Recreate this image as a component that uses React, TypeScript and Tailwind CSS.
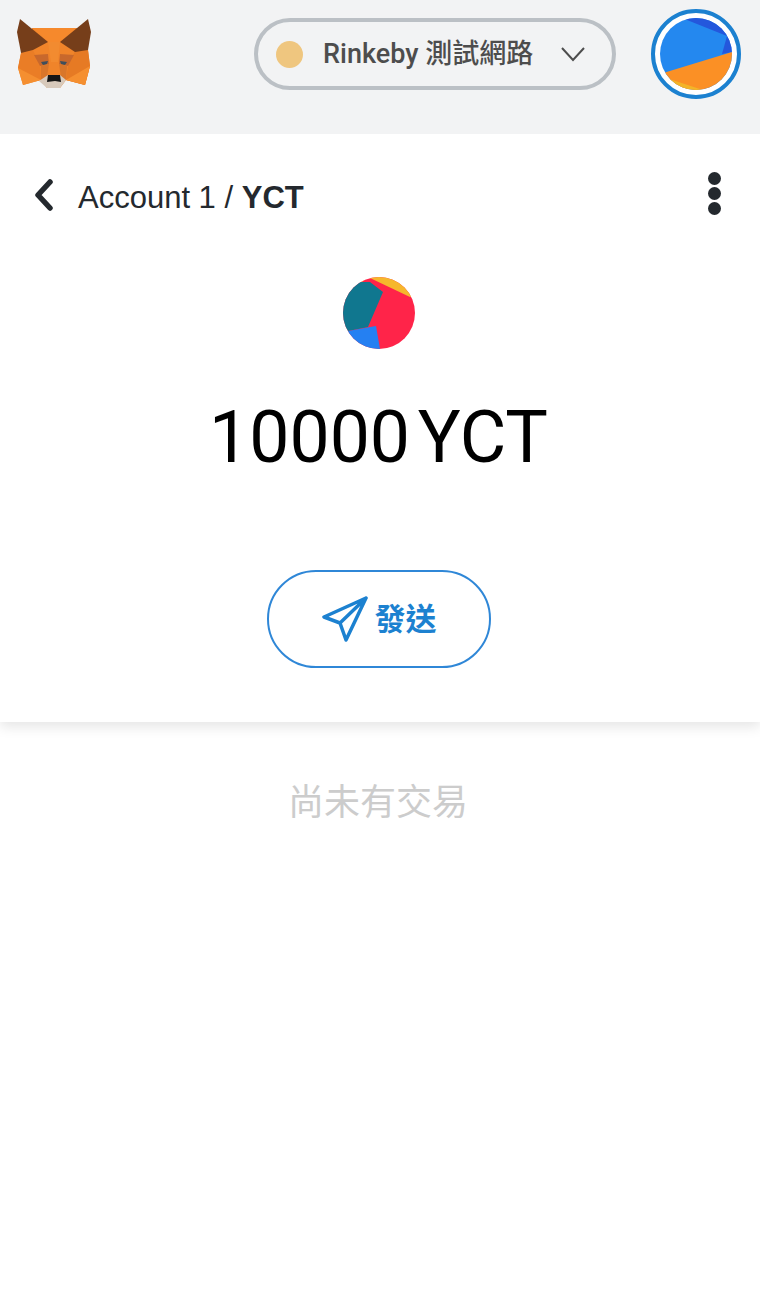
const Fox = () => (
  <svg width="74" height="69" viewBox="17 19 74 69" className="block shrink-0">
    {/* face */}
    <polygon points="32,28 77,28 88,50 90,66 85,85 66,80 60,88 47,88 41,80 23,85 18,68 21,53" fill="#f0842a" />
    <polygon points="48,42 60,42 77,28 32,28" fill="#f6892c" />
    <polygon points="48,42 51,62 58,62 60,42" fill="#f28b30" />
    <polygon points="21,53 18,68 36,81 41,80 40,66 33,50" fill="#ea7d26" />
    <polygon points="88,50 90,66 85,85 66,80 68,66 75,51" fill="#e67a24" />
    <polygon points="18,68 23,85 41,80" fill="#f58f30" />
    <polygon points="90,66 85,85 66,80" fill="#f58f30" />
    <polygon points="34,55 48,54 49,64 40,66" fill="#c8682c" />
    <polygon points="74,55 60,54 59,64 68,66" fill="#c8682c" />
    <polygon points="41,62 48,61 47,64 43,65" fill="#3f4f5c" />
    <polygon points="67,62 60,61 61,64 65,65" fill="#3f4f5c" />
    <polygon points="41,66 49,64 47,77 41,80" fill="#d9762a" />
    <polygon points="67,66 59,64 61,77 66,80" fill="#d9762a" />
    {/* muzzle */}
    <polygon points="48,75 60,75 66,80 60,88 47,88 39,81" fill="#d7c9bb" />
    <polygon points="48,75 60,75 61,82 55,81 47,82" fill="#161616" />
    {/* ears */}
    <polygon points="20,19 48,42 33,50 21,53 17,32" fill="#763e1a" />
    <polygon points="88,19 60,42 75,52 88,50 91,32" fill="#763e1a" />
  </svg>
);

const NetworkPill = () => (
  <div className="mt-[18px] ml-auto flex h-[72px] w-[362px] items-center rounded-[36px] border-4 border-[#bbc0c5] pl-[18px]">
    <div className="size-[27px] shrink-0 rounded-full bg-[#efc67f]" />
    <span className="ml-5 font-['Roboto','Noto_Sans_CJK_TC',sans-serif] text-[27px] font-medium whitespace-nowrap text-[#4d4d4d]">
      Rinkeby 測試網路
    </span>
    <svg width="24" height="15" viewBox="0 0 24 15" fill="none" className="ml-[28px] shrink-0">
      <path d="M1 1l11 12L23 1" stroke="#4d4d4d" strokeWidth="2" />
    </svg>
  </div>
);

const AccountAvatar = () => (
  <div className="mt-[9px] mr-[19px] ml-[35px] flex size-[90px] shrink-0 items-center justify-center rounded-full border-4 border-[#1c81d0] bg-white">
    <svg width="72" height="72" viewBox="0 0 72 72" className="block rounded-full">
      <rect width="72" height="72" fill="#2488ef" />
      <polygon points="22,0 72,0 72,18 67,18" fill="#2457dc" />
      <polygon points="67,18 72,18 72,34 62,36" fill="#2457dc" />
      <polygon points="0,56 72,34 72,72 0,72" fill="#fb9025" />
      <polygon points="0,58 43,72 0,72" fill="#f3b428" />
    </svg>
  </div>
);

const TokenIcon = () => (
  <svg width="72" height="72" viewBox="0 0 72 72" className="block rounded-full">
    <rect width="72" height="72" fill="#ff2449" />
    <polygon points="27,1 27,0 72,0 72,20 67,20" fill="#f6b72c" />
    <polygon points="14,0 24,0 18,6" fill="#f6b72c" />
    <polygon points="0,0 18,5 27,5 40,15 25,50 5,54 0,54" fill="#10778f" />
    <polygon points="5,54 33,49 37,72 0,72" fill="#2580f2" />
  </svg>
);

const App = () => {
  return (
    <div className="min-h-[1310px] w-[760px] bg-white font-['Liberation_Sans',sans-serif]">
      <header className="relative z-10 flex h-[134px] items-start bg-[#f2f3f4] pl-[17px]">
        <div className="mt-[19px]">
          <Fox />
        </div>
        <NetworkPill />
        <AccountAvatar />
      </header>

      <section className="flex h-[588px] flex-col items-center shadow-[0_5px_12px_rgba(0,0,0,0.1)]">
        <div className="flex h-[124px] w-full items-start">
          <svg width="20" height="32" viewBox="0 0 20 32" fill="none" className="mt-[45px] ml-[34px] shrink-0">
            <path d="M16 3L4 16l12 13" stroke="#24292e" strokeWidth="5.5" strokeLinecap="round" strokeLinejoin="round" />
          </svg>
          <div className="mt-[45px] ml-6 text-[31px] leading-[38px] whitespace-nowrap text-[#24292e]">
            Account 1 / <span className="font-bold">YCT</span>
          </div>
          <div className="mt-[38px] mr-[39px] ml-auto flex flex-col gap-[2px]">
            <div className="size-[13px] rounded-full bg-[#24292e]" />
            <div className="size-[13px] rounded-full bg-[#24292e]" />
            <div className="size-[13px] rounded-full bg-[#24292e]" />
          </div>
        </div>

        <div className="mt-[19px] mr-[2px]">
          <TokenIcon />
        </div>

        <div className="mt-[44px] mr-[3px] font-['Roboto',sans-serif] text-[71.5px] leading-[90px] whitespace-nowrap text-black [word-spacing:-10px]">
          10000 YCT
        </div>

        <button className="mt-[87px] mr-[2px] flex h-[98px] w-[224px] items-center justify-center rounded-[49px] border-2 border-[#2f87d7] text-[#1c81d0]">
          <svg width="46" height="46" viewBox="0 0 46 46" fill="none" className="shrink-0">
            <path d="M44 2L2 21l16 6 6 17L44 2zM44 2L18 27" stroke="#1c81d0" strokeWidth="3.5" strokeLinejoin="round" strokeLinecap="round" />
          </svg>
          <span className="mb-[3px] ml-[7px] font-['Noto_Sans_CJK_TC',sans-serif] text-[31px] font-bold">發送</span>
        </button>
      </section>

      <div className="mt-[52px] pr-1 text-center font-['Noto_Sans_CJK_TC',sans-serif] text-[36px] leading-[50px] text-[#cccccc]">
        尚未有交易
      </div>
    </div>
  );
};

export default App;
